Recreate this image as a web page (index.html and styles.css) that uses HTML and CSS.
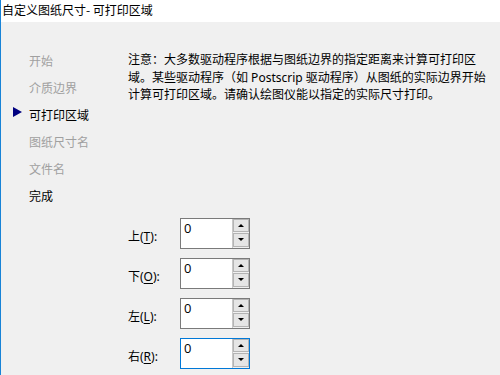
FILE: index.html
```html
<!DOCTYPE html>
<html>
<head>
<meta charset="utf-8">
<link rel="stylesheet" href="styles.css">
</head>
<body>
<div class="window">
  <div class="titlebar">自定义图纸尺寸- 可打印区域</div>
  <div class="content">
    <ul class="steps">
      <li class="step"><span class="marker"></span><span>开始</span></li>
      <li class="step"><span class="marker"></span><span>介质边界</span></li>
      <li class="step current"><span class="marker"><svg width="9" height="10" viewBox="0 0 9 10"><polygon points="0,0 9,5 0,10" fill="#000080"/></svg></span><span>可打印区域</span></li>
      <li class="step"><span class="marker"></span><span>图纸尺寸名</span></li>
      <li class="step"><span class="marker"></span><span>文件名</span></li>
      <li class="step done"><span class="marker"></span><span>完成</span></li>
    </ul>
    <div class="main">
      <p class="note">注意：大多数驱动程序根据与图纸边界的指定距离来计算可打印区域。某些驱动程序（如 Postscrip 驱动程序）从图纸的实际边界开始计算可打印区域。请确认绘图仪能以指定的实际尺寸打印。</p>
      <div class="fields">
        <div class="field">
          <label class="label">上(<u>T</u>):</label>
          <div class="spinbox">
            <div class="value">0</div>
            <div class="spin"><div class="btn"><span class="up"></span></div><div class="btn"><span class="down"></span></div></div>
          </div>
        </div>
        <div class="field">
          <label class="label">下(<u>O</u>):</label>
          <div class="spinbox">
            <div class="value">0</div>
            <div class="spin"><div class="btn"><span class="up"></span></div><div class="btn"><span class="down"></span></div></div>
          </div>
        </div>
        <div class="field">
          <label class="label">左(<u>L</u>):</label>
          <div class="spinbox">
            <div class="value">0</div>
            <div class="spin"><div class="btn"><span class="up"></span></div><div class="btn"><span class="down"></span></div></div>
          </div>
        </div>
        <div class="field">
          <label class="label">右(<u>R</u>):</label>
          <div class="spinbox focused">
            <div class="value">0</div>
            <div class="spin"><div class="btn"><span class="up"></span></div><div class="btn"><span class="down"></span></div></div>
          </div>
        </div>
      </div>
    </div>
  </div>
</div>
</body>
</html>
```

FILE: styles.css
```css
html, body {
  margin: 0;
  padding: 0;
  background: #f0f0f0;
}
body {
  font-family: "Noto Sans", "Noto Sans CJK SC", sans-serif;
  font-size: 12px;
  color: #000;
}
.window {
  width: 500px;
  height: 375px;
  border-left: 1px solid #1883d7;
  box-sizing: border-box;
  overflow: hidden;
  background: #f0f0f0;
}
.titlebar {
  height: 22px;
  background: #fff;
  line-height: 19px;
  padding-left: 1px;
  font-size: 12px;
  font-family: "Noto Sans CJK SC", sans-serif;
  color: #000;
}
.content {
  display: flex;
}
.steps {
  list-style: none;
  margin: 0;
  padding: 25px 0 0 12px;
  width: 115px;
  flex: none;
  font-family: "Noto Sans CJK SC", sans-serif;
}
.step {
  display: flex;
  align-items: center;
  height: 27px;
  color: #a0a0a0;
}
.step.current, .step.done {
  color: #000;
}
.marker {
  width: 9px;
  height: 10px;
  margin-right: 7px;
  display: flex;
  margin-top: -6px;
}
.main {
  padding-top: 29px;
  flex: 1;
}
.note {
  margin: 0;
  width: 364px;
  line-height: 17.5px;
  font-family: "Noto Sans", "Noto Sans CJK SC", sans-serif;
}
.fields {
  margin-top: 114px;
  display: flex;
  flex-direction: column;
  gap: 9px;
}
.field {
  display: flex;
  align-items: center;
  height: 31px;
}
.label {
  width: 52px;
  padding-top: 5px;
  font-family: "Noto Sans", "Noto Sans CJK SC", sans-serif;
}
.label u {
  text-decoration-thickness: 1px;
  text-underline-offset: 2px;
}
.spinbox {
  display: flex;
  width: 70px;
  height: 31px;
  box-sizing: border-box;
  border: 1px solid #7a7a7a;
  background: #fff;
}
.spinbox.focused {
  border-color: #0078d7;
}
.value {
  flex: 1;
  padding: 1px 0 0 3px;
  font-size: 13px;
  line-height: 17px;
  font-family: "Open Sans", "Noto Sans", sans-serif;
}
.spin {
  width: 17px;
  background: #f0f0f0;
  border-left: 1px solid #c8c8c8;
  display: flex;
  flex-direction: column;
  gap: 1px;
  padding: 0 0 1px 0;
  box-sizing: border-box;
}
.btn {
  flex: 1;
  background: #e5e5e5;
  border: 1px solid #b4b4b4;
  display: flex;
  align-items: center;
  justify-content: center;
}
.up {
  width: 0; height: 0;
  border-left: 3px solid transparent;
  border-right: 3px solid transparent;
  border-bottom: 3px solid #000;
}
.down {
  width: 0; height: 0;
  border-left: 3px solid transparent;
  border-right: 3px solid transparent;
  border-top: 3px solid #000;
}
```
